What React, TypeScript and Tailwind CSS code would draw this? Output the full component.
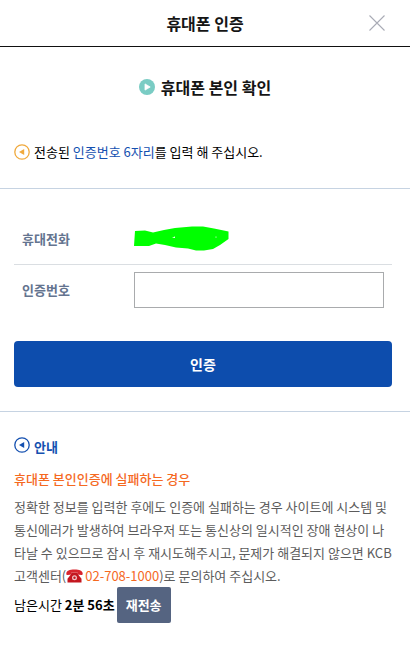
import type { ReactNode } from "react";

const SUPPORT_PHONE = "02-708-1000";

export default function App() {
  return (
    <div className="min-h-screen bg-white font-['Noto_Sans_CJK_KR','Noto_Sans',sans-serif] text-[13px] text-black">
      <Header />
      <main>
        <h2 className="flex h-20 items-center justify-center gap-1.5 text-base font-bold text-[#151515]">
          <PlayIcon />
          휴대폰 본인 확인
        </h2>

        <p className="flex h-[61px] items-start gap-1 pt-[13px] pr-[18px] pl-3.5 leading-6">
          <MarkIcon className="mt-1 text-[#f0a93c]" />
          <span>
            전송된 <span className="text-[#1450b0]">인증번호 6자리</span>를 입력 해 주십시오.
          </span>
        </p>

        <VerifyForm />
        <Guide />
      </main>
    </div>
  );
}

function Header() {
  return (
    <header className="relative flex h-[47px] items-center justify-center border-b border-[#111]">
      <h1 className="text-base font-bold text-[#151515]">휴대폰 인증</h1>
      <button type="button" aria-label="닫기" className="absolute right-6 cursor-pointer">
        <svg width="18" height="18" viewBox="0 0 18 18" className="block" aria-hidden="true">
          <path d="M1.5 1.5 16.5 16.5M16.5 1.5 1.5 16.5" stroke="#a9abb5" strokeWidth="1.1" fill="none" />
        </svg>
      </button>
    </header>
  );
}

function VerifyForm() {
  return (
    <form
      onSubmit={(e) => e.preventDefault()}
      className="border-y border-[#c6d3e2] pt-6 pr-[18px] pb-6 pl-3.5"
    >
      <Row label={<span>휴대전화</span>} divided>
        <MaskedNumber />
      </Row>
      <Row label={<label htmlFor="code">인증번호</label>}>
        <input
          id="code"
          type="text"
          inputMode="numeric"
          className="block h-9 w-full border border-[#a9abad] px-2 outline-none focus:border-[#0d4dad]"
        />
      </Row>
      <button
        type="submit"
        className="mt-[26px] block h-[46px] w-full cursor-pointer rounded bg-[#0d4dad] text-sm font-bold text-white"
      >
        인증
      </button>
    </form>
  );
}

function Row({
  label,
  divided = false,
  children,
}: {
  label: ReactNode;
  divided?: boolean;
  children: ReactNode;
}) {
  return (
    <div
      className={
        divided
          ? "flex h-[52px] items-center border-b border-[#dadee2] px-2"
          : "flex h-[50px] items-center px-2"
      }
    >
      <div className="w-28 shrink-0 font-bold text-[#64748f]">{label}</div>
      <div className="min-w-0 grow">{children}</div>
    </div>
  );
}

function Guide() {
  return (
    <section className="pt-[19px] pr-[18px] pb-5 pl-3.5">
      <h3 className="flex items-center gap-1 leading-8 font-bold text-[#1450b0]">
        <MarkIcon className="mb-1" />
        안내
      </h3>
      <h4 className="leading-8 font-medium text-[#f5691f]">휴대폰 본인인증에 실패하는 경우</h4>
      <p className="leading-[23px] break-all text-[#5c5c5c]">
        정확한 정보를 입력한 후에도 인증에 실패하는 경우 사이트에 시스템 및 통신에러가 발생하여
        브라우저 또는 통신상의 일시적인 장애 현상이 나타날 수 있으므로 잠시 후 재시도해주시고,
        문제가 해결되지 않으면 KCB 고객센터(
        <PhoneIcon />
        <a href={`tel:${SUPPORT_PHONE}`} className="text-[#f5691f]">
          {SUPPORT_PHONE}
        </a>
        )로 문의하여 주십시오.
      </p>
      <div className="flex items-center gap-0.5">
        <span>
          남은시간 <strong>2분 56초</strong>
        </span>
        <button
          type="button"
          className="h-9 w-[54px] cursor-pointer rounded-xs bg-[#556481] font-bold text-white"
        >
          재전송
        </button>
      </div>
    </section>
  );
}

function PlayIcon() {
  return (
    <svg width="16" height="16" viewBox="0 0 16 16" className="shrink-0" aria-hidden="true">
      <circle cx="8" cy="8" r="8" fill="#7accc4" />
      <path d="M6 4.9v6.2L11.2 8z" fill="#fff" stroke="#fff" strokeWidth="0.8" strokeLinejoin="round" />
    </svg>
  );
}

/** Ringed left-pointing marker that opens a notice line. */
function MarkIcon({ className }: { className: string }) {
  return (
    <svg width="16" height="16" viewBox="0 0 16 16" className={`shrink-0 ${className}`} aria-hidden="true">
      <circle cx="8" cy="8" r="7.2" fill="none" stroke="currentColor" strokeWidth="1.3" />
      <path d="M5 8 10.2 5v6z" fill="currentColor" />
    </svg>
  );
}

function PhoneIcon() {
  return (
    <svg width="17" height="14" viewBox="0 0 17 14" className="mr-0.5 inline-block align-[-2px]" aria-hidden="true">
      <path d="M5.5 3.5h6l.8 2.2 3.200 4V13.500h-14V9.700l3.200-4z" fill="#c4161f" />
      <path
        d="M.3 4.400C.5 1.800 3.500.4 8.500.4s8 1.400 8.200 4c0 1-.4 1.500-1.200 1.500l-2.500-.2c-.8 0-1.100-.5-1.100-1.300v-.6c-2-.4-4.800-.4-6.800 0v.6c0 .8-.3 1.300-1.100 1.300l-2.500.2C.7 5.900.3 5.400.3 4.400z"
        fill="#d8242d"
      />
      <circle cx="8.500" cy="8.700" r="2.500" fill="#f0c4c6" />
      <circle cx="8.500" cy="8.700" r="1.200" fill="#c4161f" />
    </svg>
  );
}

/** Phone number scribbled over with solid green. */
function MaskedNumber() {
  return (
    <svg width="95" height="25" viewBox="0 0 95 25" className="block" aria-hidden="true">
      <path
        d="M1 5 11 4.500 19 6.500 30 4 41 2 58 .5 69 .5 80 2.500 94.500 5.500V13L86 19 79 23 70 24.500H62L54 22.500 42 21.500 31 19 22 17.500 15 20H0z"
        fill="#0f0"
      />
      <path d="M38 11.500 41 10.500V12z" fill="#fff" />
      <circle cx="82" cy="11" r="0.600" fill="#fff" />
    </svg>
  );
}
